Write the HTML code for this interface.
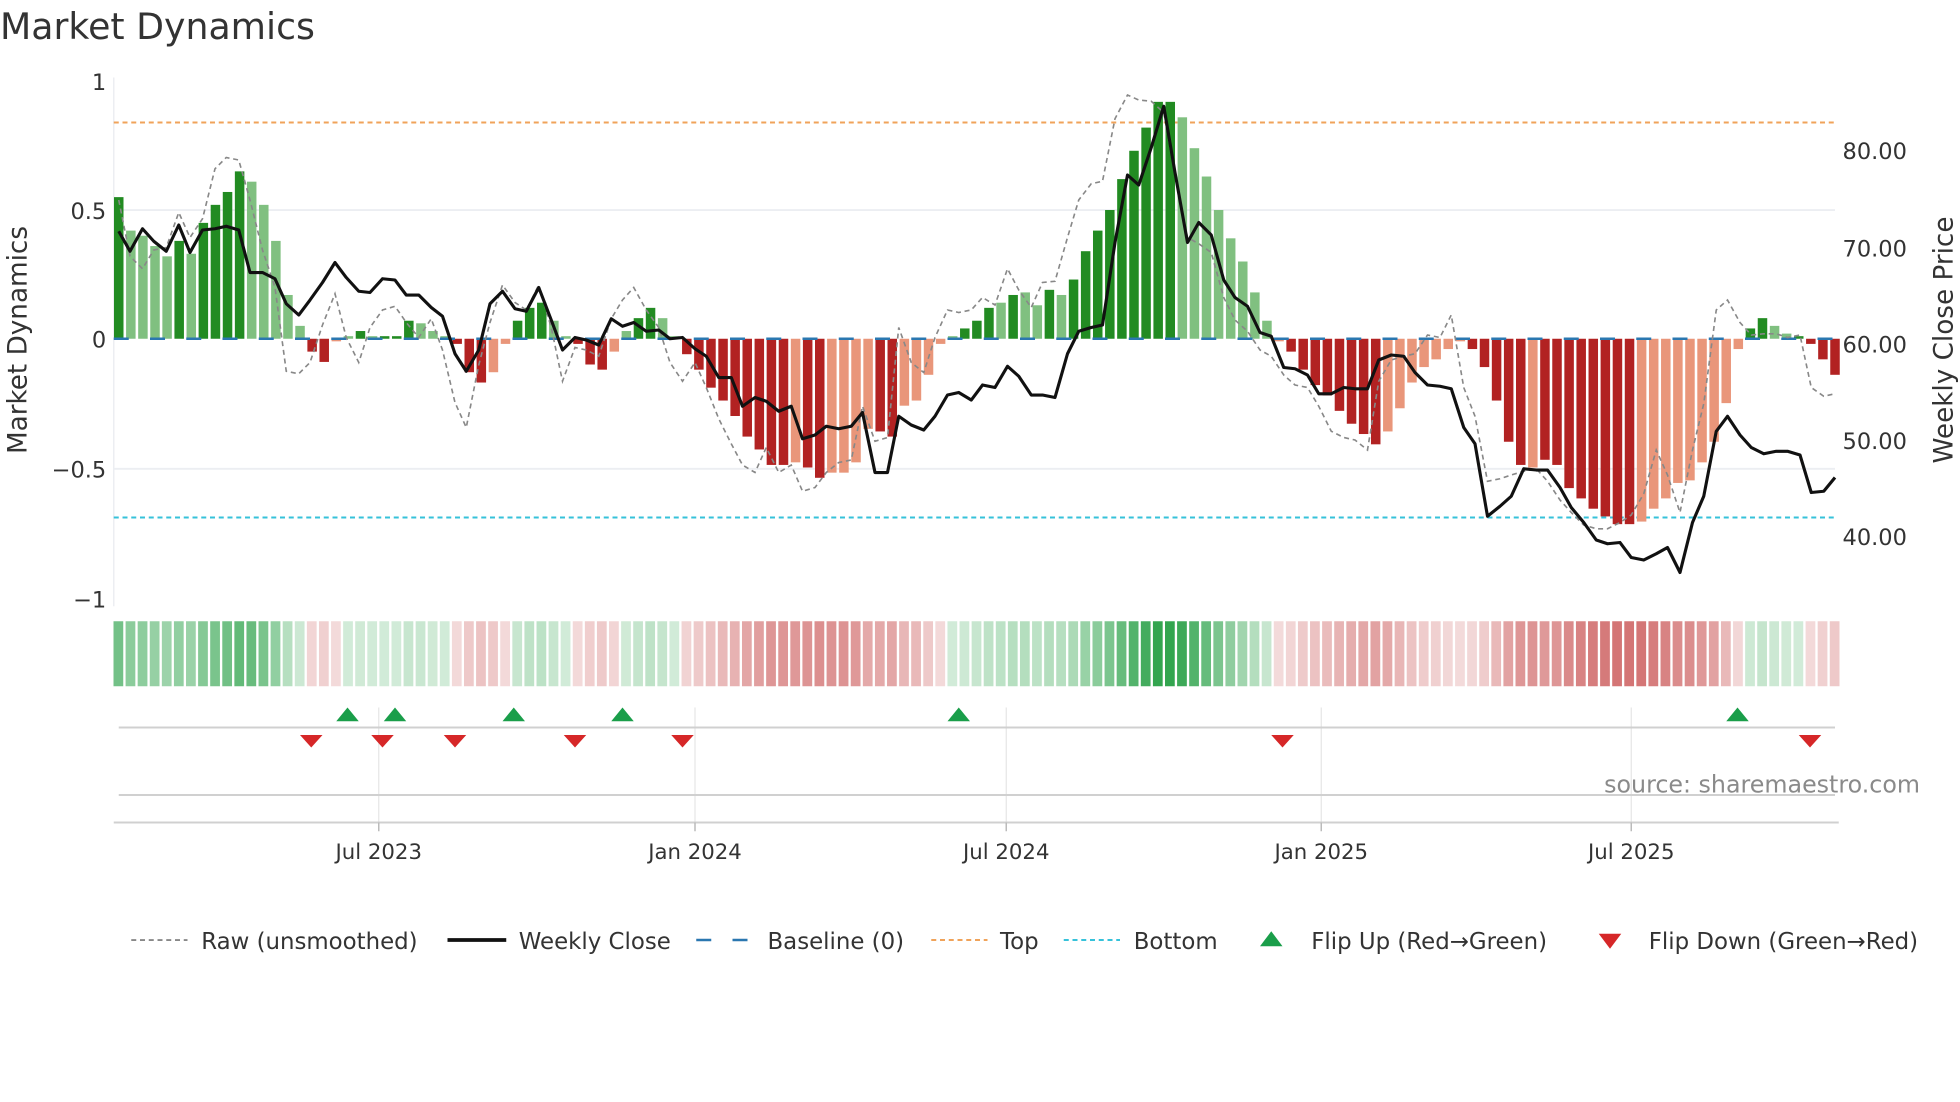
<!DOCTYPE html>
<html><head><meta charset="utf-8">
<style>
html,body{margin:0;padding:0;background:#fff;}
svg{display:block;}
text{font-family:"DejaVu Sans","Liberation Sans",sans-serif;fill:#333;}
</style></head>
<body>
<svg id="s" width="1960" height="1102" viewBox="0 0 1568 881.6" xmlns="http://www.w3.org/2000/svg">
<rect width="1568" height="882" fill="#fff"/>
<text x="0" y="31" font-size="29">Market Dynamics</text>
<line x1="91" y1="168" x2="1468" y2="168" stroke="#eceef2" stroke-width="1.5"/>
<line x1="91" y1="375" x2="1468" y2="375" stroke="#eceef2" stroke-width="1.5"/>
<line x1="91" y1="62" x2="91" y2="485" stroke="#eceef2" stroke-width="1.2"/>
<g font-size="18" text-anchor="end">
<text x="85" y="72">1</text>
<text x="85" y="175">0.5</text>
<text x="85" y="278">0</text>
<text x="85" y="382">−0.5</text>
<text x="85" y="486">−1</text>
</g>
<g font-size="18">
<text x="1474" y="127">80.00</text>
<text x="1474" y="205">70.00</text>
<text x="1474" y="282">60.00</text>
<text x="1474" y="359">50.00</text>
<text x="1474" y="436">40.00</text>
</g>
<text font-size="21" transform="translate(21,272) rotate(-90)" text-anchor="middle">Market Dynamics</text>
<text font-size="21" transform="translate(1562,272) rotate(-90)" text-anchor="middle">Weekly Close Price</text>
<line x1="91" y1="98" x2="1468" y2="98" stroke="#f0a35a" stroke-width="1.6" stroke-dasharray="4,3"/>
<line x1="91" y1="414" x2="1468" y2="414" stroke="#36c2da" stroke-width="1.6" stroke-dasharray="4,3"/>
<g id="bars"></g>
<line x1="91" y1="271" x2="1468" y2="271" stroke="#2a77b0" stroke-width="2" stroke-dasharray="12,17"/>
<polyline id="raw" fill="none" stroke="#888" stroke-width="1.3" stroke-dasharray="4,3"/>
<polyline id="close" fill="none" stroke="#111" stroke-width="2.5" stroke-linejoin="round"/>
<g id="heat"></g>
<g stroke="#e6e6e6" stroke-width="1">
<line x1="303" y1="566" x2="303" y2="658"/><line x1="556" y1="566" x2="556" y2="658"/>
<line x1="805" y1="566" x2="805" y2="658"/><line x1="1057" y1="566" x2="1057" y2="658"/>
<line x1="1305" y1="566" x2="1305" y2="658"/>
</g>
<line x1="95" y1="582" x2="1468" y2="582" stroke="#d0d0d0" stroke-width="1.6"/>
<line x1="95" y1="636" x2="1468" y2="636" stroke="#d0d0d0" stroke-width="1.6"/>
<line x1="91" y1="658" x2="1471" y2="658" stroke="#d0d0d0" stroke-width="1.6"/>
<g stroke="#bbb" stroke-width="1.2">
<line x1="303" y1="658" x2="303" y2="665"/><line x1="556" y1="658" x2="556" y2="665"/>
<line x1="805" y1="658" x2="805" y2="665"/><line x1="1057" y1="658" x2="1057" y2="665"/>
<line x1="1305" y1="658" x2="1305" y2="665"/>
</g>
<g id="sig"></g>
<g font-size="17" text-anchor="middle">
<text x="303" y="687">Jul 2023</text><text x="556" y="687">Jan 2024</text>
<text x="805" y="687">Jul 2024</text><text x="1057" y="687">Jan 2025</text>
<text x="1305" y="687">Jul 2025</text>
</g>
<text x="1536" y="634" font-size="19" text-anchor="end" style="fill:#8a8a8a">source: sharemaestro.com</text>
<g font-size="18.3">
<line x1="105" y1="752" x2="150" y2="752" stroke="#888" stroke-width="1.5" stroke-dasharray="4,3"/>
<text x="161" y="759">Raw (unsmoothed)</text>
<line x1="358" y1="752" x2="405" y2="752" stroke="#111" stroke-width="3"/>
<text x="415" y="759">Weekly Close</text>
<line x1="557" y1="752" x2="603" y2="752" stroke="#2a77b0" stroke-width="2" stroke-dasharray="12,17"/>
<text x="614" y="759">Baseline (0)</text>
<line x1="745" y1="752" x2="790" y2="752" stroke="#f0a35a" stroke-width="1.6" stroke-dasharray="4,3"/>
<text x="800" y="759">Top</text>
<line x1="851" y1="752" x2="896" y2="752" stroke="#36c2da" stroke-width="1.6" stroke-dasharray="4,3"/>
<text x="907" y="759">Bottom</text>
<polygon points="1008,757 1026,757 1017,745" fill="#1a9e4a"/>
<text x="1049" y="759">Flip Up (Red→Green)</text>
<polygon points="1279,747 1297,747 1288,759" fill="#d62728"/>
<text x="1319" y="759">Flip Down (Green→Red)</text>
</g>
</svg>
<script>
var NS="http://www.w3.org/2000/svg";
function el(t,a,p){var e=document.createElementNS(NS,t);for(var k in a)e.setAttribute(k,a[k]);p.appendChild(e);return e;}
var D=[[.55,1],[.42,0],[.40,0],[.36,0],[.32,0],[.38,1],[.33,0],[.45,1],[.52,1],[.57,1],[.65,1],[.61,0],[.52,0],[.38,0],[.17,0],[.05,0],
[-.05,1],[-.09,1],[-.01,0],[.01,0],[.03,1],[.01,0],[.01,1],[.01,1],[.07,1],[.06,0],[.03,0],[.01,0],
[-.02,1],[-.13,1],[-.17,1],[-.13,0],[-.02,0],[.07,1],[.12,1],[.14,1],[.07,0],[.01,0],[-.02,1],[-.10,1],[-.12,1],[-.05,0],[.03,0],[.08,1],[.12,1],[.08,0],[.01,0],
[-.06,1],[-.12,1],[-.19,1],[-.24,1],[-.30,1],[-.38,1],[-.43,1],[-.49,1],[-.49,1],[-.48,0],[-.50,1],[-.54,1],[-.52,0],[-.52,0],[-.48,0],[-.35,0],[-.36,1],[-.38,1],[-.26,0],[-.24,0],[-.14,0],[-.02,0],
[.01,0],[.04,1],[.07,1],[.12,1],[.14,0],[.17,1],[.18,0],[.13,0],[.19,1],[.17,0],[.23,1],[.34,1],[.42,1],[.50,1],[.62,1],[.73,1],[.82,1],[.92,1],[.92,1],[.86,0],[.74,0],[.63,0],[.50,0],[.39,0],[.30,0],[.18,0],[.07,0],
[-.01,0],[-.05,1],[-.12,1],[-.18,1],[-.22,1],[-.28,1],[-.33,1],[-.37,1],[-.41,1],[-.36,0],[-.27,0],[-.17,0],[-.11,0],[-.08,0],[-.04,0],[-.01,0],
[-.04,1],[-.11,1],[-.24,1],[-.40,1],[-.49,1],[-.50,0],[-.47,1],[-.49,1],[-.58,1],[-.62,1],[-.66,1],[-.69,1],[-.72,1],[-.72,1],[-.71,0],[-.66,0],[-.62,0],[-.56,0],[-.55,0],[-.48,0],[-.40,0],[-.25,0],[-.04,0],
[.04,1],[.08,1],[.05,0],[.02,0],[.01,1],[-.02,1],[-.08,1],[-.14,1]];
var bars=document.getElementById("bars"),heat=document.getElementById("heat");
var step=(1468-95)/(D.length-1);
D.forEach(function(d,i){
 var v=d[0],cx=95+i*step,y0=271,y1=271-v*206;
 var col=v>=0?(d[1]?"#228b22":"#80c080"):(d[1]?"#b22222":"#e9967a");
 el("rect",{x:cx-3.8,y:Math.min(y0,y1),width:7.6,height:Math.max(Math.abs(y1-y0),0.8),fill:col},bars);
 var a=0.2+0.75*Math.min(Math.abs(v)/0.92,1);
 var hc=v>=0?"rgba(40,160,70,"+a.toFixed(2)+")":"rgba(200,80,80,"+a.toFixed(2)+")";
 el("rect",{x:cx-4.2,y:497,width:7.8,height:52,fill:hc},heat);
});
var C=[95,185,104,201,114,183,123,193,133,201,143,180,152,202,162,184,172,183,181,181,191,184,200,218,210,218,220,223,229,243,239,252,248,240,258,226,268,210,277,222,287,233,296,234,306,223,316,224,325,236,335,236,345,246,354,253,364,283,373,297,383,280,392,243,402,233,412,247,421,249,431,230,441,256,450,280,460,270,469,272,479,276,489,255,498,261,507,258,517,265,527,264,536,271,546,270,556,279,565,285,575,302,585,302,594,325,604,318,613,321,623,329,633,325,642,351,652,348,661,341,671,343,681,341,690,330,700,378,710,378,719,333,729,340,739,344,748,333,758,316,767,314,777,320,786,308,796,310,806,293,815,301,825,316,834,316,844,318,854,283,863,265,873,262,882,260,892,194,902,140,911,148,921,118,931,85,940,138,950,194,959,178,969,188,979,224,988,238,998,245,1008,266,1017,269,1027,294,1036,295,1046,300,1055,315,1065,315,1075,310,1084,311,1094,311,1103,288,1113,284,1123,285,1132,298,1142,308,1152,309,1161,311,1171,342,1180,355,1190,413,1200,405,1209,397,1219,375,1229,376,1238,376,1248,390,1257,406,1267,418,1277,432,1286,435,1296,434,1305,446,1315,448,1325,443,1334,438,1344,458,1354,418,1363,397,1373,345,1382,333,1392,348,1401,358,1411,363,1421,361,1430,361,1440,364,1449,394,1459,393,1468,382];
var R=[95,160,104,205,114,215,123,200,133,198,143,170,152,190,162,175,172,135,181,126,191,128,200,160,210,200,220,230,229,297,239,299,248,290,258,260,268,235,277,270,287,290,296,262,306,248,316,245,325,258,335,270,345,255,354,280,364,322,373,342,383,292,392,258,402,228,412,242,421,248,431,228,441,262,450,305,460,278,469,280,479,285,489,255,498,240,507,230,517,248,527,262,536,290,546,305,556,290,565,310,575,335,585,355,594,372,604,378,613,358,623,378,633,372,642,393,652,390,661,378,671,370,681,368,690,325,700,353,710,350,719,262,729,290,739,298,748,270,758,248,767,250,777,248,786,238,796,244,806,215,815,232,825,246,834,226,844,225,854,190,863,160,873,147,882,145,892,95,902,76,911,80,921,81,931,90,940,140,950,190,959,195,969,202,979,238,988,256,998,265,1008,280,1017,285,1027,300,1036,308,1046,310,1055,325,1065,345,1075,350,1084,352,1094,360,1103,305,1113,288,1123,285,1132,283,1142,268,1152,270,1161,252,1171,310,1180,333,1190,385,1200,383,1209,380,1219,377,1229,375,1238,385,1248,400,1257,410,1267,420,1277,423,1286,423,1296,418,1305,412,1315,395,1325,360,1334,380,1344,410,1354,360,1363,323,1373,248,1382,240,1392,258,1401,268,1411,267,1421,267,1430,270,1440,268,1449,310,1459,317,1468,315];
function pts(a){var s=[];for(var i=0;i<a.length;i+=2)s.push(a[i]+","+a[i+1]);return s.join(" ");}
document.getElementById("close").setAttribute("points",pts(C));
document.getElementById("raw").setAttribute("points",pts(R));
var sig=document.getElementById("sig");
[278,316,411,498,767,1390].forEach(function(x){el("polygon",{points:(x-9)+",577 "+(x+9)+",577 "+x+",566",fill:"#1a9e4a"},sig);});
[249,306,364,460,546,1026,1448].forEach(function(x){el("polygon",{points:(x-9)+",588 "+(x+9)+",588 "+x+",598",fill:"#d62728"},sig);});
</script>
</body></html>
